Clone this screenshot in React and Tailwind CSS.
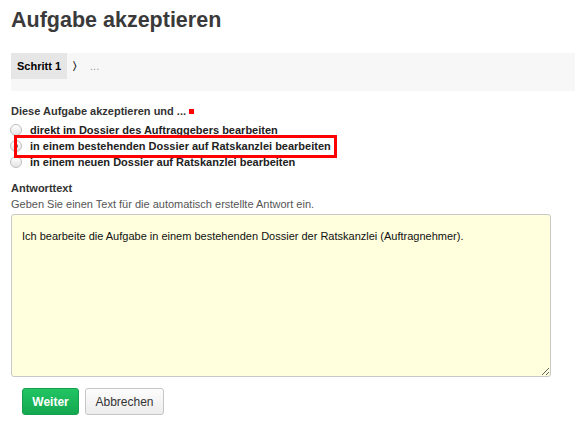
import React, { useState } from "react";

const options = [
  "direkt im Dossier des Auftraggebers bearbeiten",
  "in einem bestehenden Dossier auf Ratskanzlei bearbeiten",
  "in einem neuen Dossier auf Ratskanzlei bearbeiten",
];

const Radio = ({ checked }) => (
  <span className="relative inline-block w-[12px] h-[12px] rounded-full border border-[#bdbdbd] bg-gradient-to-b from-[#ffffff] to-[#e4e4e4] shrink-0">
    {checked && (
      <span className="absolute left-[3px] top-[3px] w-[4px] h-[4px] rounded-full bg-[#666]" />
    )}
  </span>
);

export default function App() {
  const [choice, setChoice] = useState(1);

  return (
    <div className="w-[575px] h-[438px] bg-white font-['Liberation_Sans',Arial,sans-serif] text-[11px] text-[#333] overflow-hidden">
      <div className="pl-[11px]">
        <h1 className="pt-[6px] text-[21.5px] leading-[28px] font-bold text-[#3a3a3a]">
          Aufgabe akzeptieren
        </h1>

        {/* Breadcrumb */}
        <div className="mt-[19px] h-[38px] bg-[#f7f7f7]">
          <div className="flex items-center h-[26px]">
            <span className="h-full px-[6px] flex items-center bg-[#e6e6e6] font-bold text-black">
              Schritt 1
            </span>
            <span className="ml-[5px] font-bold text-black">〉</span>
            <span className="ml-[7px] text-[#999]">...</span>
          </div>
        </div>

        {/* Choice */}
        <div className="relative mt-[13px]">
          <div className="flex items-center font-bold h-[14px]">
            Diese Aufgabe akzeptieren und ...
            <span className="ml-[3px] w-[5px] h-[5px] bg-[#f00]" />
          </div>
          <div className="mt-[4px]">
            {options.map((label, i) => (
              <label
                key={label}
                onClick={() => setChoice(i)}
                className="flex items-center h-[16px] gap-[8px] font-bold text-[#222] -ml-[1px]"
              >
                <Radio checked={choice === i} />
                {label}
              </label>
            ))}
          </div>
          <div className="absolute left-[3px] top-[31px] w-[323px] h-[23px] border-[3px] border-[#f00]" />
        </div>

        {/* Antworttext */}
        <div className="mt-[10px]">
          <div className="font-bold text-[#333] leading-[16px]">Antworttext</div>
          <div className="text-[#555] leading-[16px]">
            Geben Sie einen Text für die automatisch erstellte Antwort ein.
          </div>
          <textarea
            className="mt-[2px] block w-[540px] h-[163px] resize-y bg-[#ffffdd] border border-[#c8c8c8] rounded-[3px] px-[10px] pt-[13px] text-[11px] text-[#111] leading-[16px] outline-none"
            defaultValue="Ich bearbeite die Aufgabe in einem bestehenden Dossier der Ratskanzlei (Auftragnehmer)."
          />
        </div>

        {/* Buttons */}
        <div className="flex gap-[6px] mt-[11px] ml-[11px]">
          <button className="h-[27px] w-[57px] rounded-[3px] border border-[#16a04e] bg-gradient-to-b from-[#22c463] to-[#13a850] text-white font-bold text-[12px]">
            Weiter
          </button>
          <button className="h-[27px] w-[79px] rounded-[3px] border border-[#c6c6c6] bg-gradient-to-b from-[#fdfdfd] to-[#ececec] text-[#333] text-[12px]">
            Abbrechen
          </button>
        </div>
      </div>
    </div>
  );
}
